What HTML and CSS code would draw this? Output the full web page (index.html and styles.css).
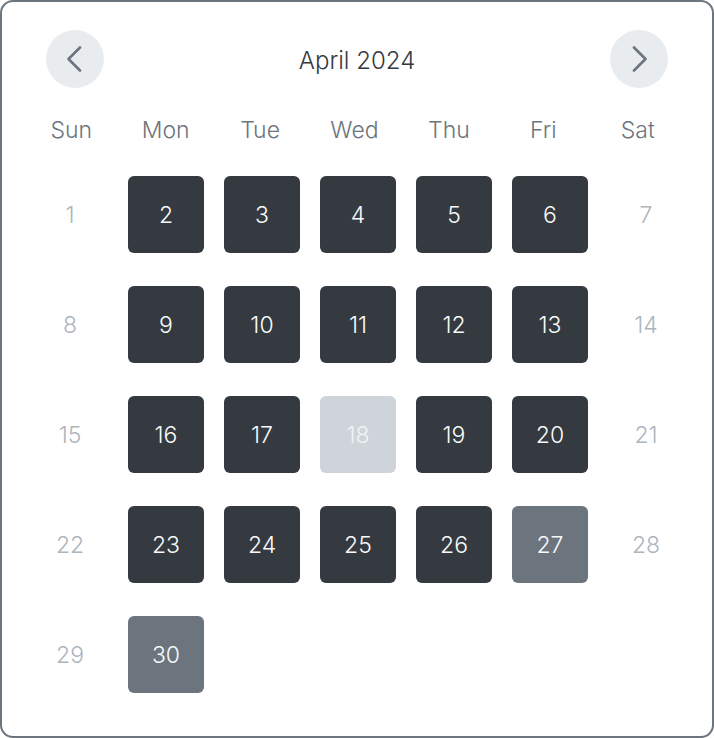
FILE: index.html
```html
<!DOCTYPE html>
<html lang="en">
<head>
<meta charset="utf-8">
<title>April 2024</title>
<link rel="stylesheet" href="styles.css">
</head>
<body>
<div class="calendar">
  <div class="cal-header">
    <button class="nav-btn" aria-label="Previous month">
      <svg width="16" height="28" viewBox="0 0 16 28"><path d="M13 2.5 L1.5 14 L13 25.5" fill="none" stroke="#6c757d" stroke-width="2.6" stroke-linecap="round" stroke-linejoin="round"/></svg>
    </button>
    <div class="cal-title">April 2024</div>
    <button class="nav-btn" aria-label="Next month">
      <svg width="16" height="28" viewBox="0 0 16 28"><path d="M3 2.5 L14.5 14 L3 25.5" fill="none" stroke="#6c757d" stroke-width="2.6" stroke-linecap="round" stroke-linejoin="round"/></svg>
    </button>
  </div>
  <div class="weekdays">
    <div>Sun</div><div>Mon</div><div>Tue</div><div>Wed</div><div>Thu</div><div>Fri</div><div>Sat</div>
  </div>
  <div class="days">
    <div class="day muted">1</div>
    <div class="day active">2</div>
    <div class="day active">3</div>
    <div class="day active">4</div>
    <div class="day active">5</div>
    <div class="day active">6</div>
    <div class="day muted">7</div>

    <div class="day muted">8</div>
    <div class="day active">9</div>
    <div class="day active">10</div>
    <div class="day active">11</div>
    <div class="day active">12</div>
    <div class="day active">13</div>
    <div class="day muted">14</div>

    <div class="day muted">15</div>
    <div class="day active">16</div>
    <div class="day active">17</div>
    <div class="day disabled">18</div>
    <div class="day active">19</div>
    <div class="day active">20</div>
    <div class="day muted">21</div>

    <div class="day muted">22</div>
    <div class="day active">23</div>
    <div class="day active">24</div>
    <div class="day active">25</div>
    <div class="day active">26</div>
    <div class="day soft">27</div>
    <div class="day muted">28</div>

    <div class="day muted">29</div>
    <div class="day soft">30</div>
  </div>
</div>
</body>
</html>
```
FILE: styles.css
```css
* { box-sizing: border-box; }

html, body {
  margin: 0;
  padding: 0;
  background: #ffffff;
}

body {
  font-family: Inter, "Noto Sans", "Liberation Sans", sans-serif;
  font-size: 23px;
  font-weight: 350;
}

.calendar {
  width: 714px;
  height: 738px;
  border: 2px solid #6c757d;
  border-radius: 13px;
  padding-top: 28px;
  background: #ffffff;
}

.cal-header {
  display: flex;
  align-items: center;
  justify-content: space-between;
  margin: 0 44px;
  height: 58px;
}

.nav-btn {
  width: 58px;
  height: 58px;
  border-radius: 50%;
  border: none;
  background: #e9ecef;
  display: flex;
  align-items: center;
  justify-content: center;
  padding: 0;
  cursor: pointer;
}

.cal-title {
  color: #343a40;
  font-size: 24px;
  line-height: 28px;
  padding-top: 3px;
}

.weekdays {
  display: grid;
  grid-template-columns: repeat(7, 1fr);
  width: 661px;
  margin: 28px 0 0 22px;
  color: #6c757d;
  font-size: 23px;
  line-height: 28px;
  text-align: center;
}

.days {
  display: grid;
  grid-template-columns: repeat(7, 76px);
  grid-auto-rows: 77px;
  column-gap: 20px;
  row-gap: 33px;
  margin: 32px 0 0 30px;
}

.day {
  display: flex;
  align-items: center;
  justify-content: center;
  border-radius: 6px;
  font-size: 23px;
  line-height: 28px;
}

.day.muted {
  color: #adb5bd;
}

.day.active {
  background: #343a40;
  color: #f8f9fa;
}

.day.soft {
  background: #6c757d;
  color: #f8f9fa;
}

.day.disabled {
  background: #ced4da;
  color: #f1f3f5;
}
```
